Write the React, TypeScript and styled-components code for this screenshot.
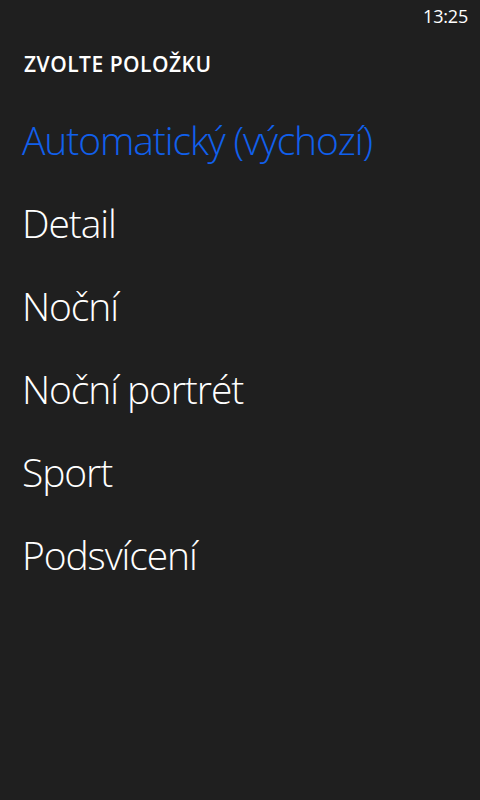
import styled, { createGlobalStyle } from "styled-components";

const items = [
  "Automatický (výchozí)",
  "Detail",
  "Noční",
  "Noční portrét",
  "Sport",
  "Podsvícení",
];

const GlobalStyle = createGlobalStyle`
  html, body {
    margin: 0;
    padding: 0;
    background: #1f1f1f;
  }
  body {
    font-family: "Open Sans", "Noto Sans", sans-serif;
    color: #ffffff;
  }
`;

export default function App() {
  const selected = 0;

  return (
    <Screen>
      <GlobalStyle />
      <StatusBar>
        <Clock>13:25</Clock>
      </StatusBar>
      <Header>ZVOLTE POLOŽKU</Header>
      <List>
        {items.map((name, index) => (
          <Item key={name} $selected={index === selected}>
            {name}
          </Item>
        ))}
      </List>
    </Screen>
  );
}

const Screen = styled.div`
  width: 480px;
  height: 800px;
  background: #1f1f1f;
  display: flex;
  flex-direction: column;
  overflow: hidden;
`;

const StatusBar = styled.div`
  height: 32px;
  display: flex;
  justify-content: flex-end;
  align-items: center;
  padding: 0 12px;
`;

const Clock = styled.span`
  font-size: 18px;
  line-height: 32px;
  font-weight: 400;
  letter-spacing: -0.2px;
`;

const Header = styled.h1`
  margin: 0;
  padding: 14px 24px 0;
  font-size: 21px;
  line-height: 36px;
  font-weight: 600;
  letter-spacing: 0.5px;
`;

const List = styled.ul`
  list-style: none;
  margin: 0;
  padding: 16px 0 0 22px;
  display: flex;
  flex-direction: column;
`;

const Item = styled.li<{ $selected: boolean }>`
  height: 83px;
  line-height: 83px;
  font-size: 39px;
  font-weight: 300;
  letter-spacing: -1.1px;
  color: ${(p) => (p.$selected ? "#1160ec" : "#ffffff")};
  white-space: nowrap;
  cursor: pointer;
`;
